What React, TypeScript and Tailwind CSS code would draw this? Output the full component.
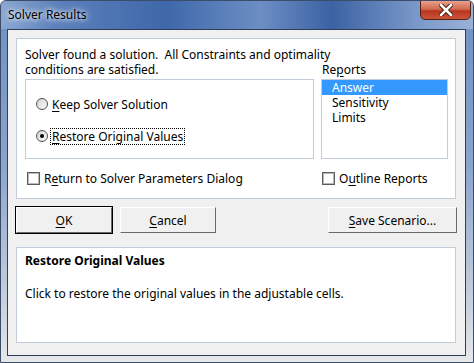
import React from "react";

const font = { fontFamily: '"Noto Sans", "Open Sans", sans-serif' };

function Radio({ checked }: { checked?: boolean }) {
  return (
    <span className="w-[12px] h-[12px] rounded-full border border-[#4f4f4f] bg-[linear-gradient(135deg,#d4d4d4,#fafafa)] flex items-center justify-center shrink-0">
      {checked && <span className="w-[4px] h-[4px] rounded-full bg-black" />}
    </span>
  );
}

function Check() {
  return (
    <span className="w-[13px] h-[13px] border border-[#5c5c5c] bg-white shadow-[inset_0_0_0_1px_#b8b8b8] shrink-0" />
  );
}

function Button({ children, width, isDefault }: { children: React.ReactNode; width: string; isDefault?: boolean }) {
  return (
    <div
      className={`${width} h-[26px] flex items-center justify-center bg-[#f0f0f0] border-t-white border-l-white border-b-[#696969] border-r-[#696969] border text-black ${
        isDefault ? "outline outline-1 outline-black" : ""
      }`}
    >
      <span className="leading-[15px]">{children}</span>
    </div>
  );
}

export default function App() {
  return (
    <div
      className="w-[474px] h-[363px] rounded-t-[6px] border border-[#3b4d6b] bg-[linear-gradient(180deg,#6d8fc4_0%,#8aa4cb_45%,#c9d2de_85%,#e6e8ea_100%)] flex flex-col text-[12px] text-black overflow-hidden"
      style={font}
    >
      {/* Title bar */}
      <div className="h-[28px] flex items-start justify-between bg-[linear-gradient(90deg,#8ba7d2_0%,#5b80bb_12%,#3f68aa_35%,#6c8ec4_55%,#3b62a3_70%,#7a98c9_88%,#9ab1d6_100%)]">
        <span className="ml-[7px] mt-[6px] leading-[15px] text-[12px] text-black [text-shadow:0_0_8px_#fff,0_0_4px_#fff]">
          Solver Results
        </span>
        <div className="mr-[2px] -mt-[1px] w-[51px] h-[20px] rounded-b-[5px] border border-[#5a2018] bg-[linear-gradient(180deg,#e8a08c_0%,#d26a50_45%,#b8361e_55%,#c8543a_100%)] flex items-center justify-center">
          <svg width="14" height="12" viewBox="0 0 14 12">
            <path d="M2 1 L12 11 M12 1 L2 11" stroke="#4a1a10" strokeWidth="4.5" strokeLinecap="square" />
            <path d="M2 1 L12 11 M12 1 L2 11" stroke="#ffffff" strokeWidth="2.5" strokeLinecap="square" />
          </svg>
        </div>
      </div>

      {/* Client area */}
      <div className="ml-[6px] mr-[7px] h-[327px] border border-[#2e3f5c] bg-[#f0f0f0] px-[8px] pt-[8px] flex flex-col">
        {/* Top panel */}
        <div className="w-[440px] h-[161px] bg-white border border-[#c3cdd9] pl-[8px] pt-[8px] flex flex-col">
          <div className="leading-[15px] whitespace-nowrap">Solver found a solution.&nbsp; All Constraints and optimality</div>
          <div className="flex gap-[7px]">
            <div className="w-[289px] flex flex-col">
              <div className="leading-[15px]">conditions are satisfied.</div>
              <div className="mt-[2px] h-[80px] border border-[#c3cdd9] pl-[10px] pt-[15px] flex flex-col gap-[14px]">
                <div className="h-[18px] flex items-center">
                  <Radio />
                  <span className="ml-[2px] px-[1px] border border-dotted border-transparent leading-[15px]">
                    <u className="underline-offset-2">K</u>eep Solver Solution
                  </span>
                </div>
                <div className="h-[18px] flex items-center">
                  <Radio checked />
                  <span className="ml-[2px] px-[1px] border border-dotted border-black leading-[15px]">
                    <u className="underline-offset-2">R</u>estore Original Values
                  </span>
                </div>
              </div>
              <div className="mt-[10px] h-[18px] pl-[2px] flex items-center gap-[4px]">
                <Check />
                <span className="leading-[15px]">
                  R<u className="underline-offset-2">e</u>turn to Solver Parameters Dialog
                </span>
              </div>
            </div>
            <div className="w-[127px] flex flex-col">
              <div className="leading-[15px] pl-[1px]">
                Re<u className="underline-offset-2">p</u>orts
              </div>
              <div className="mt-[2px] h-[80px] border border-[#c3cdd9] flex flex-col">
                <div className="h-[15px] leading-[15px] pl-[10px] bg-[#3399ff] text-white">Answer</div>
                <div className="h-[15px] leading-[15px] pl-[10px]">Sensitivity</div>
                <div className="h-[15px] leading-[15px] pl-[10px]">Limits</div>
              </div>
              <div className="mt-[10px] h-[18px] pl-[1px] flex items-center gap-[4px]">
                <Check />
                <span className="leading-[15px]">
                  O<u className="underline-offset-2">u</u>tline Reports
                </span>
              </div>
            </div>
          </div>
        </div>

        {/* Buttons */}
        <div className="mt-[8px] flex">
          <Button width="w-[96px]" isDefault>
            <u className="underline-offset-2">O</u>K
          </Button>
          <div className="ml-[8px]">
            <Button width="w-[96px]">
              <u className="underline-offset-2">C</u>ancel
            </Button>
          </div>
          <div className="ml-auto">
            <Button width="w-[129px]">
              <u className="underline-offset-2">S</u>ave Scenario...
            </Button>
          </div>
        </div>

        {/* Description */}
        <div className="mt-[14px] w-[440px] h-[96px] bg-white border border-[#c3cdd9] pl-[8px] pt-[5px] flex flex-col">
          <div className="leading-[15px] font-bold">Restore Original Values</div>
          <div className="mt-[18px] leading-[15px]">Click to restore the original values in the adjustable cells.</div>
        </div>
      </div>
    </div>
  );
}
